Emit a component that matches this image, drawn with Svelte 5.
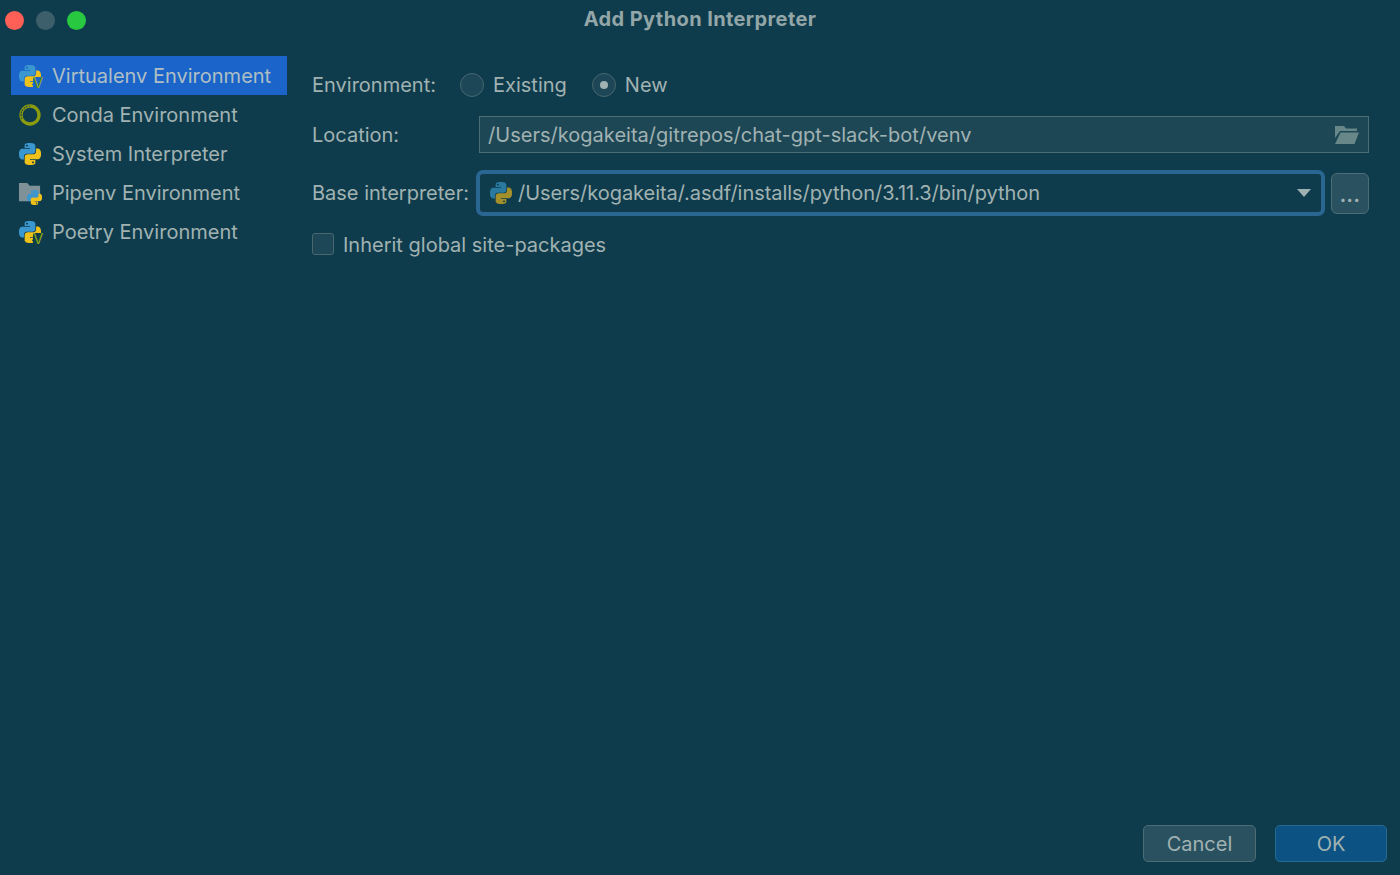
<script lang="ts">
  const blue = 'M14.25.18l.9.2.73.26.59.3.45.32.34.34.25.34.16.33.1.3.04.26.02.2-.01.13V8.5l-.05.63-.13.55-.21.46-.26.38-.3.31-.33.25-.35.19-.35.14-.33.1-.3.07-.26.04-.21.02H8.77l-.69.05-.59.14-.5.22-.41.27-.33.32-.27.35-.2.36-.15.37-.1.35-.07.32-.04.27-.02.21v3.06H3.17l-.21-.03-.28-.07-.32-.12-.35-.18-.36-.26-.36-.36-.35-.46-.32-.59-.28-.73-.21-.88-.14-1.05-.05-1.23.06-1.22.16-1.04.24-.87.32-.71.36-.57.4-.44.42-.33.42-.24.4-.16.36-.1.32-.05.24-.01h.16l.06.01h8.16v-.83H6.18l-.01-2.75-.02-.37.05-.34.11-.31.17-.28.25-.26.31-.23.38-.2.44-.18.51-.15.58-.12.64-.1.71-.06.77-.04.84-.02 1.27.05zM7.95 2.16l-.23.33-.08.41.08.41.23.34.33.22.41.09.41-.09.33-.22.23-.34.08-.41-.08-.41-.23-.33-.33-.22-.41-.09-.41.09z';
  const yellow = 'M21.04 6.11l.28.06.32.12.35.18.36.27.36.35.35.47.32.59.28.73.21.88.14 1.04.05 1.23-.06 1.23-.16 1.04-.24.86-.32.71-.36.57-.4.45-.42.33-.42.24-.4.16-.36.09-.32.05-.24.02-.16-.01h-8.22v.82h5.84l.01 2.76.02.36-.05.34-.11.31-.17.29-.25.25-.31.24-.38.2-.44.17-.51.15-.58.13-.64.09-.71.07-.77.04-.84.01-1.27-.04-1.07-.14-.9-.2-.73-.25-.59-.3-.45-.33-.34-.34-.25-.34-.16-.33-.1-.3-.04-.25-.02-.2.01-.13v-5.34l.05-.64.13-.54.21-.46.26-.38.3-.32.33-.24.35-.2.35-.14.33-.1.3-.06.26-.04.21-.02.13-.01h5.84l.69-.05.59-.14.5-.21.41-.28.33-.32.27-.35.2-.36.15-.36.1-.35.07-.32.04-.28.02-.21V6.07h2.09l.14.01zM14.57 20.36l-.23.33-.08.41.08.41.23.33.33.23.41.08.41-.08.33-.23.23-.33.08-.41-.08-.41-.23-.33-.33-.23-.41-.08-.41.08z';

  const items = [
    { label: 'Virtualenv Environment', icon: 'venv', selected: true },
    { label: 'Conda Environment', icon: 'conda' },
    { label: 'System Interpreter', icon: 'python' },
    { label: 'Pipenv Environment', icon: 'pipenv' },
    { label: 'Poetry Environment', icon: 'venv' }
  ];
</script>

{#snippet snake(cls)}
  <svg class={cls} viewBox="0 0 24 24">
    <path d={blue} class="snake-blue" />
    <path d={yellow} class="snake-yellow" />
  </svg>
{/snippet}

<div class="dialog">
  <header class="titlebar">
    <div class="lights">
      <span class="light red"></span>
      <span class="light grey"></span>
      <span class="light green"></span>
    </div>
    <h1>Add Python Interpreter</h1>
  </header>

  <div class="body">
    <nav class="sidebar">
      {#each items as item}
        <div class="item" class:selected={item.selected}>
          <span class="item-icon">
            {#if item.icon === 'conda'}
              <svg class="full" viewBox="0 0 24 24">
                <circle cx="12" cy="12" r="9.800" fill="none" stroke="#8b9c0e" stroke-width="3.600" />
                <path d="M12 2.200a9.800 9.800 0 0 0-8.500 14.600" fill="none" stroke="#0f3c4c" stroke-width="1.300" stroke-dasharray="1.300 1.700" />
                <path d="M7 3.500a9.800 9.800 0 0 0-5 9" fill="none" stroke="#0f3c4c" stroke-width="1" stroke-dasharray="1 2" />
              </svg>
            {:else if item.icon === 'pipenv'}
              <svg class="full" viewBox="0 0 24 24">
                <path d="M0 1h9l2.500 3H23v17H0z" fill="#7f9297" />
              </svg>
              {@render snake('pipenv-snake')}
            {:else}
              {@render snake('full')}
              {#if item.icon === 'venv'}
                <span class="v">V</span>
              {/if}
            {/if}
          </span>
          <span class="item-label">{item.label}</span>
        </div>
      {/each}
    </nav>

    <main class="form">
      <div class="row env-row">
        <span class="label env-label">Environment:</span>
        <span class="radio"></span>
        <span class="label radio-label">Existing</span>
        <span class="radio checked"></span>
        <span class="label">New</span>
      </div>

      <div class="row location-row">
        <span class="label location-label">Location:</span>
        <div class="field">
          <span class="path">/Users/kogakeita/gitrepos/chat-gpt-slack-bot/venv</span>
          <svg class="folder" viewBox="0 0 24 18">
            <path d="M0 0h9l2 2.500h11v2.500H5L0 12z" fill="#688789" />
            <path d="M5.500 6.500H24L19.500 18H0z" fill="#688789" />
          </svg>
        </div>
      </div>

      <div class="row base-row">
        <span class="label base-label">Base interpreter:</span>
        <div class="combo">
          {@render snake('combo-snake')}
          <span class="path">/Users/kogakeita/.asdf/installs/python/3.11.3/bin/python</span>
          <span class="arrow"></span>
        </div>
        <button class="browse">...</button>
      </div>

      <div class="row check-row">
        <span class="checkbox"></span>
        <span class="label">Inherit global site-packages</span>
      </div>
    </main>
  </div>

  <footer class="footer">
    <button class="btn">Cancel</button>
    <button class="btn primary">OK</button>
  </footer>
</div>

<style>
  :global(body) {
    margin: 0;
    background: #0f3c4c;
  }

  .dialog {
    height: 875px;
    display: flex;
    flex-direction: column;
    background: #0f3c4c;
    color: #a1b2b2;
    font-family: Inter, "Liberation Sans", sans-serif;
    font-size: 20px;
    overflow: hidden;
  }

  .titlebar {
    position: relative;
    height: 38px;
    flex: none;
    display: flex;
    align-items: center;
    justify-content: center;
  }

  h1 {
    margin: 0;
    font-size: 20px;
    font-weight: 700;
    letter-spacing: 0.4px;
    color: #93a6a8;
  }

  .lights {
    position: absolute;
    left: 5px;
    top: 11px;
    display: flex;
    gap: 12px;
  }

  .light {
    width: 19px;
    height: 19px;
    border-radius: 50%;
  }

  .red { background: #fe5f57; }
  .grey { background: #3d5f6b; }
  .green { background: #28c840; }

  .body {
    flex: 1;
    display: flex;
    padding-top: 18px;
    min-height: 0;
  }

  .sidebar {
    --row-bg: #0f3c4c;
    width: 276px;
    margin-left: 11px;
    flex: none;
    display: flex;
    flex-direction: column;
  }

  .item {
    height: 39px;
    display: flex;
    align-items: center;
    padding-left: 8px;
    gap: 11px;
  }

  .item.selected {
    --row-bg: #1b64ca;
    background: var(--row-bg);
    color: #aebfc4;
  }

  .item-icon {
    position: relative;
    width: 22px;
    height: 22px;
    flex: none;
  }

  .item-label {
    white-space: nowrap;
  }

  .item-icon :global(svg) {
    display: block;
  }

  .item-icon :global(.full) {
    width: 22px;
    height: 22px;
  }

  .item-icon :global(.pipenv-snake) {
    position: absolute;
    right: -1px;
    bottom: -1px;
    width: 15px;
    height: 15px;
  }

  .snake-blue { fill: #3a97cf; }
  .snake-yellow { fill: #eec11b; }

  .v {
    position: absolute;
    right: -2px;
    bottom: -2px;
    width: 10px;
    height: 12px;
    background: var(--row-bg);
    border-top-left-radius: 2px;
    text-align: center;
    font-size: 15px;
    line-height: 12px;
    color: #8aa512;
  }

  .form {
    flex: 1;
    margin-left: 25px;
    margin-right: 31px;
    min-width: 0;
    display: flex;
    flex-direction: column;
  }

  .row {
    display: flex;
    align-items: center;
  }

  .label {
    white-space: nowrap;
  }

  .env-row {
    height: 38px;
    margin-top: 10px;
  }

  .env-label {
    width: 148px;
  }

  .radio {
    position: relative;
    width: 24px;
    height: 24px;
    border: 1px solid #48676f;
    border-radius: 50%;
    background: #1d4757;
    box-sizing: border-box;
    margin-right: 9px;
  }

  .radio-label {
    margin-right: 25px;
  }

  .radio.checked::after {
    content: "";
    position: absolute;
    left: 7px;
    top: 7px;
    width: 8px;
    height: 8px;
    border-radius: 50%;
    background: #a1b2b2;
  }

  .location-row {
    margin-top: 12px;
    height: 37px;
  }

  .location-label {
    width: 167px;
  }

  .field {
    flex: 1;
    height: 37px;
    box-sizing: border-box;
    border: 1px solid #4d6d75;
    background: #1e4756;
    display: flex;
    align-items: center;
    justify-content: space-between;
    padding: 0 9px 0 8px;
  }

  .field .path {
    letter-spacing: 0.02px;
  }

  .folder {
    width: 24px;
    height: 18px;
    margin-top: 1px;
  }

  .base-row {
    margin-top: 17px;
    height: 46px;
  }

  .base-label {
    width: 164px;
  }

  .combo {
    width: 849px;
    height: 46px;
    box-sizing: border-box;
    border: 4px solid #2a6692;
    border-radius: 7px;
    display: flex;
    align-items: center;
    padding-left: 10px;
    gap: 6px;
  }

  .combo :global(.combo-snake) {
    width: 22px;
    height: 22px;
    flex: none;
  }

  .combo :global(.combo-snake .snake-blue) { fill: #2a7a9f; }
  .combo :global(.combo-snake .snake-yellow) { fill: #a4902a; }

  .combo .path {
    flex: 1;
    letter-spacing: -0.05px;
  }

  .arrow {
    width: 0;
    height: 0;
    border-left: 7px solid transparent;
    border-right: 7px solid transparent;
    border-top: 8px solid #9fb0b2;
    margin-right: 10px;
  }

  .browse {
    width: 38px;
    height: 41px;
    margin-left: 6px;
    box-sizing: border-box;
    border: 1px solid #4d6d75;
    border-radius: 6px;
    background: #2a5160;
    color: #a1b2b2;
    font: inherit;
    font-size: 19px;
    font-weight: 700;
    letter-spacing: 0.5px;
    padding: 4px 0 0;
  }

  .check-row {
    margin-top: 17px;
    height: 24px;
    gap: 9px;
  }

  .checkbox {
    width: 22px;
    height: 22px;
    margin-bottom: 2px;
    box-sizing: border-box;
    border: 1px solid #48676f;
    border-radius: 3px;
    background: #1d4757;
  }

  .footer {
    flex: none;
    display: flex;
    justify-content: flex-end;
    gap: 19px;
    padding: 0 13px 13px 0;
  }

  .btn {
    width: 113px;
    height: 37px;
    box-sizing: border-box;
    border: 1px solid #4d6d75;
    border-radius: 5px;
    background: #2a5160;
    color: #a1b2b2;
    font: inherit;
    padding: 0;
  }

  .btn.primary {
    width: 112px;
    background: #0c5282;
    border-color: #256a92;
  }
</style>
